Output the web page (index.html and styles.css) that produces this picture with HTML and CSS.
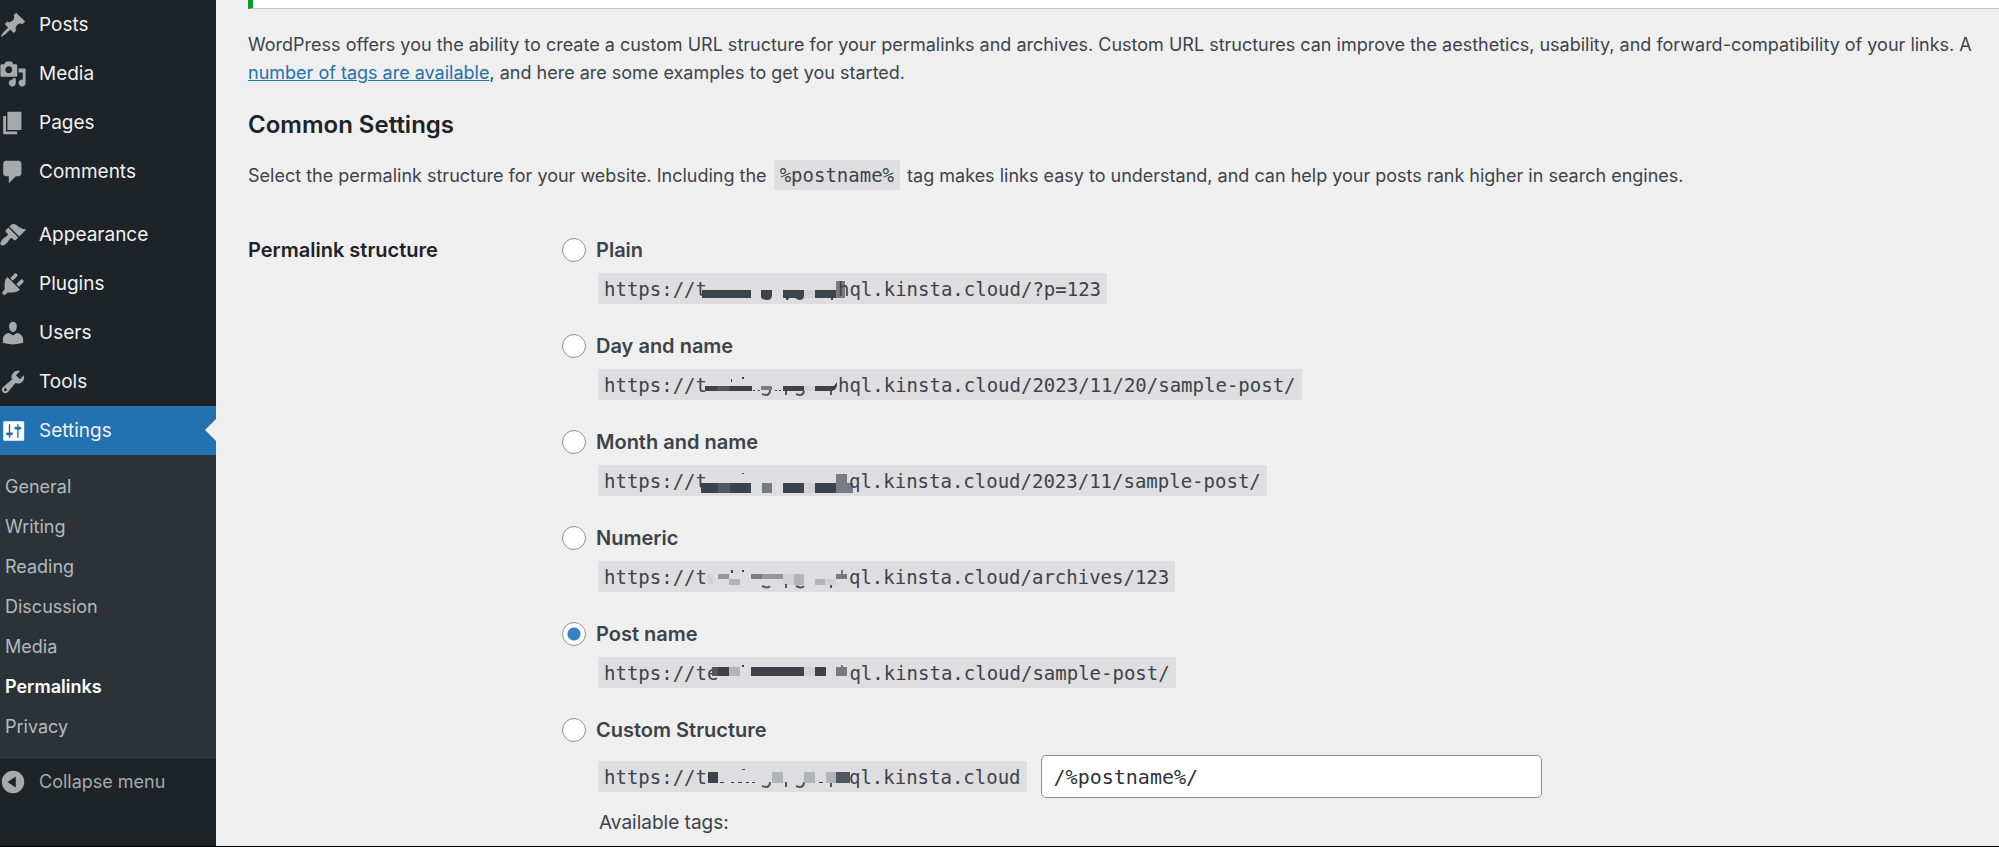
FILE: index.html
```
<!DOCTYPE html>
<html lang="en">
    <head>
        <meta charset="utf-8">
        <meta name="viewport" content="width=device-width, initial-scale=1">
        <title>Permalink Settings</title>
        <link rel="stylesheet" href="styles.css">
    </head>

    <body>
        <nav class="sidebar">
            <ul class="menu">
                <li><a href="#"><svg class="icon" viewBox="0 0 20 20"><path d="M10.44 3.02l1.82-1.82 6.36 6.35-1.83 1.82c-1.05-.68-2.48-.57-3.41.36l-.75.75c-.92.93-1.04 2.35-.35 3.41l-1.83 1.82-2.41-2.41-2.8 2.79c-.42.42-3.38 2.71-3.8 2.29s1.86-3.39 2.28-3.81l2.79-2.79L4.1 9.36l1.83-1.82c1.05.69 2.48.57 3.4-.36l.75-.75c.93-.92 1.05-2.35.36-3.41z"/></svg>Posts</a></li>
                <li><a href="#"><svg class="icon" viewBox="0 0 20 20"><path d="M13 11V4c0-.55-.45-1-1-1h-1.67L9 1H5L3.67 3H2c-.55 0-1 .45-1 1v7c0 .55.45 1 1 1h10c.55 0 1-.45 1-1zM7 4.5c1.38 0 2.5 1.12 2.5 2.5S8.38 9.5 7 9.5 4.5 8.38 4.5 7 5.62 4.5 7 4.5zM14 6h5v10.5c0 1.38-1.12 2.5-2.5 2.5S14 17.88 14 16.5s1.12-2.5 2.5-2.5c.17 0 .34.02.5.05V9h-3V6zm-4 8.05V13h2v3.5c0 1.38-1.12 2.5-2.5 2.5S7 17.88 7 16.5 8.12 14 9.5 14c.17 0 .34.02.5.05z"/></svg>Media</a></li>
                <li><a href="#"><svg class="icon" viewBox="0 0 20 20"><path d="M6 15V2h10v13H6zm-1 1h8v2H3V5h2v11z"/></svg>Pages</a></li>
                <li><a href="#"><svg class="icon" viewBox="0 0 20 20"><path d="M5 2h9c1.1 0 2 .9 2 2v7c0 1.1-.9 2-2 2h-2l-5 5v-5H5c-1.1 0-2-.9-2-2V4c0-1.1.9-2 2-2z"/></svg>Comments</a></li>
                <li class="separator"></li>
                <li><a href="#"><svg class="icon" viewBox="0 0 20 20"><path d="M14.48 11.06L7.41 3.99l1.5-1.5c.5-.56 2.3-.47 3.51.32 1.21.8 1.43 1.28 2.91 2.1 1.18.64 2.45 1.26 4.45.85zm-.71.71L6.7 4.7 4.93 6.47c-.39.39-.39 1.02 0 1.41l1.06 1.06c.39.39.39 1.03 0 1.42-.6.6-1.43 1.11-2.21 1.69-.35.26-.7.53-1.01.84C1.43 14.23.4 16.08 1.4 17.07c.99 1 2.84-.03 4.18-1.36.31-.31.58-.66.85-1.02.57-.78 1.08-1.61 1.69-2.21.39-.39 1.02-.39 1.41 0l1.06 1.06c.39.39 1.02.39 1.41 0z"/></svg>Appearance</a></li>
                <li><a href="#"><svg class="icon" viewBox="0 0 20 20"><path d="M13.11 4.36L9.87 7.6 8 5.73l3.24-3.24c.35-.34 1.05-.2 1.56.32.52.51.66 1.21.31 1.55zm-8 1.77l.91-1.12 9.01 9.01-1.19.84c-.71.71-2.63 1.16-3.82 1.16H6.14L4.9 17.26c-.59.59-1.54.59-2.12 0-.59-.58-.59-1.53 0-2.12l1.24-1.24v-3.88c0-1.13.4-3.19 1.09-3.89zm7.26 3.97l3.24-3.24c.34-.35 1.04-.21 1.55.31.52.51.66 1.21.31 1.55l-3.24 3.25z"/></svg>Plugins</a></li>
                <li><a href="#"><svg class="icon" viewBox="0 0 20 20"><path d="M10 9.25c-2.27 0-2.73-3.44-2.73-3.44C7 4.02 7.82 2 9.97 2c2.16 0 2.98 2.02 2.71 3.81 0 0-.41 3.44-2.68 3.44zm0 2.57L12.72 10c2.39 0 4.52 2.33 4.52 4.53v2.49s-3.65 1.13-7.24 1.13c-3.65 0-7.24-1.13-7.24-1.13v-2.49c0-2.25 1.94-4.48 4.47-4.48z"/></svg>Users</a></li>
                <li><a href="#"><svg class="icon" viewBox="0 0 20 20"><path d="M16.68 9.77c-1.34 1.34-3.3 1.67-4.95.99l-5.41 6.52c-.99.99-2.59.99-3.58 0s-.99-2.59 0-3.57l6.52-5.42c-.68-1.65-.35-3.61.99-4.95 1.28-1.28 3.12-1.62 4.72-1.06l-2.89 2.89 2.82 2.82 2.86-2.87c.53 1.58.18 3.39-1.08 4.65zM3.81 16.21c.4.39 1.04.39 1.43 0 .4-.4.4-1.04 0-1.43-.39-.4-1.03-.4-1.43 0-.39.39-.39 1.03 0 1.43z"/></svg>Tools</a></li>
                <li class="current"><a href="#"><svg class="icon" viewBox="0 0 20 20"><path d="M18 16V4c0-.55-.45-1-1-1H4c-.55 0-1 .45-1 1v12c0 .55.45 1 1 1h13c.55 0 1-.45 1-1zM8 11h1c.55 0 1 .45 1 1s-.45 1-1 1H8v1.5c0 .28-.22.5-.5.5s-.5-.22-.5-.5V13H6c-.55 0-1-.45-1-1s.45-1 1-1h1V5.5c0-.28.22-.5.5-.5s.5.22.5.5V11zm5-2h-1c-.55 0-1-.45-1-1s.45-1 1-1h1V5.5c0-.28.22-.5.5-.5s.5.22.5.5V7h1c.55 0 1 .45 1 1s-.45 1-1 1h-1v5.5c0 .28-.22.5-.5.5s-.5-.22-.5-.5V9z"/></svg>Settings</a></li>
            </ul>
            <ul class="submenu">
                <li><a href="#">General</a></li>
                <li><a href="#">Writing</a></li>
                <li><a href="#">Reading</a></li>
                <li><a href="#">Discussion</a></li>
                <li><a href="#">Media</a></li>
                <li><a href="#" class="active">Permalinks</a></li>
                <li><a href="#">Privacy</a></li>
            </ul>
            <button type="button" class="collapse">
                <svg class="icon" viewBox="0 0 20 20"><path fill-rule="evenodd" d="M10 2a8 8 0 1 0 0 16 8 8 0 0 0 0-16zM12 6v8l-6-4z"/></svg>Collapse menu
            </button>
        </nav>

        <main class="content">
            <div class="notice"></div>
            <p class="intro">WordPress offers you the ability to create a custom URL structure for your permalinks and archives. Custom URL structures can improve the aesthetics, usability, and forward-compatibility of your links. A<br><a href="#">number of tags are available</a>, and here are some examples to get you started.</p>
            <h2>Common Settings</h2>
            <p class="select">Select the permalink structure for your website. Including the <code>%postname%</code> tag makes links easy to understand, and can help your posts rank higher in search engines.</p>

            <div class="structure">
                <h3 id="structure-title">Permalink structure</h3>
                <div class="options" role="radiogroup" aria-labelledby="structure-title">
                    <div class="option">
                        <input type="radio" name="selection" id="plain">
                        <label for="plain">Plain</label>
                        <code class="url">https://t<svg class="mask" width="136" height="31">
                            <rect class="dark" x="0" y="17" width="49" height="8"/>
                            <path class="dark" d="M59 17h11v5q0 5-5 5-6 0-6-4z"/>
                            <path class="dark" d="M81 17h21v6q0 4-5 4l-4-2h-6l-1 2h-2v-2h-3z"/>
                            <rect class="light" x="102" y="17" width="11" height="8"/>
                            <path class="dark" d="M113 17h21v8h-3v2h-2v-2h-16z"/>
                            <rect class="grey" x="134" y="8" width="9" height="17"/>
                        </svg>hql.kinsta.cloud/?p=123</code>
                    </div>
                    <div class="option">
                        <input type="radio" name="selection" id="day">
                        <label for="day">Day and name</label>
                        <code class="url">https://t<svg class="mask" width="136" height="31">
                            <rect class="dark" x="3" y="17" width="12" height="5"/>
                            <rect class="slate" x="15" y="17" width="12" height="5"/>
                            <rect class="dark" x="27" y="17" width="23" height="5"/>
                            <path class="dark" d="M29 10h1v3h-1zM40 8h2v2h-2zM51 21h2v1h-2zM56 21h2v1h-2z"/>
                            <rect class="grey" x="59" y="17" width="11" height="4"/>
                            <path class="line" d="M60 25q8 3 8-4M94 25q8 3 8-4M84 21v5M129 21v5"/>
                            <rect class="dark" x="81" y="17" width="21" height="5"/>
                            <rect class="light" x="102" y="17" width="11" height="5"/>
                            <path class="dark" d="M113 17h19l3-4q1 9-7 9h-15zM73 21h2v1h-2zM77 21h2v1h-2z"/>
                        </svg>hql.kinsta.cloud/2023/11/20/sample-post/</code>
                    </div>
                    <div class="option">
                        <input type="radio" name="selection" id="month">
                        <label for="month">Month and name</label>
                        <code class="url">https://t<svg class="mask" width="147" height="31">
                            <rect class="dark" x="-1" y="18" width="50" height="10"/>
                            <rect class="slate" x="16" y="18" width="12" height="10"/>
                            <rect class="dark" x="40" y="8" width="2" height="1"/>
                            <rect class="grey" x="60" y="18" width="10" height="10"/>
                            <rect class="dark" x="81" y="18" width="21" height="10"/>
                            <rect class="light" x="102" y="18" width="11" height="10"/>
                            <rect class="dark" x="113" y="18" width="21" height="10"/>
                            <rect class="grey" x="134" y="9" width="11" height="19"/>
                            <rect class="grey" x="145" y="18" width="6" height="10"/>
                        </svg>ql.kinsta.cloud/2023/11/sample-post/</code>
                    </div>
                    <div class="option">
                        <input type="radio" name="selection" id="numeric">
                        <label for="numeric">Numeric</label>
                        <code class="url">https://t<svg class="mask" width="147" height="31">
                            <rect class="light" x="6" y="13" width="5" height="10"/>
                            <rect class="mid" x="16" y="13" width="11" height="5"/>
                            <rect class="pale" x="27" y="18" width="11" height="6"/>
                            <path class="dark" d="M29 9h2v3h-2zM40 9h2v2h-2z"/>
                            <rect class="grey" x="49" y="13" width="11" height="5"/>
                            <rect class="mid" x="60" y="13" width="21" height="5"/>
                            <rect class="light" x="81" y="13" width="11" height="11"/>
                            <rect class="pale" x="92" y="13" width="10" height="11"/>
                            <path class="line" d="M60 25q6 3 8 0M94 25q6 3 8 0M84 23v4M129 23v4"/>
                            <rect class="pale" x="113" y="18" width="10" height="6"/>
                            <rect class="light" x="123" y="18" width="11" height="6"/>
                            <path class="grey" d="M134 13h5v-4h2v4h4v5h-11z"/>
                        </svg>ql.kinsta.cloud/archives/123</code>
                    </div>
                    <div class="option">
                        <input type="radio" name="selection" id="postname" checked>
                        <label for="postname">Post name</label>
                        <code class="url">https://te<svg class="mask" width="136" height="31">
                            <rect class="slate" x="-1" y="10" width="6" height="9"/>
                            <rect class="dark" x="5" y="10" width="11" height="9"/>
                            <rect class="pale" x="16" y="10" width="11" height="9"/>
                            <rect class="dark" x="29" y="8" width="2" height="2"/>
                            <rect class="dark" x="38" y="10" width="53" height="9"/>
                            <rect class="light" x="91" y="10" width="11" height="9"/>
                            <rect class="dark" x="102" y="10" width="11" height="9"/>
                            <path class="grey" d="M123 10h5v-2h2v2h4v9h-11z"/>
                        </svg>ql.kinsta.cloud/sample-post/</code>
                    </div>
                    <div class="option">
                        <input type="radio" name="selection" id="custom">
                        <label for="custom">Custom Structure</label>
                        <div class="custom">
                            <code class="url">https://t<svg class="mask" width="147" height="31">
                                <rect class="dark" x="6" y="11" width="10" height="11"/>
                                <path class="dark" d="M40 8h3v1h-3zM18 21h4v1h-4zM29 21h3v1h-3zM36 21h4v1h-4zM44 21h3v1h-3zM50 21h3v1h-3zM117 21h4v1h-4z"/>
                                <path class="line" d="M60 25q8 3 8-4M94 25q8 3 8-4M84 21v5M129 21v5"/>
                                <rect class="pale" x="70" y="11" width="11" height="11"/>
                                <rect class="pale" x="102" y="11" width="11" height="11"/>
                                <rect class="pale" x="124" y="11" width="10" height="11"/>
                                <rect class="slate" x="134" y="11" width="14" height="11"/>
                            </svg>ql.kinsta.cloud</code>
                            <input type="text" class="custom-field" aria-label="Custom structure" value="/%postname%/">
                        </div>
                        <p class="tags">Available tags:</p>
                    </div>
                </div>
            </div>
        </main>
    </body>
</html>
```
FILE: styles.css
```
* {
    box-sizing: border-box;
}
body {
    display: flex;
    height: 100vh;
    margin: 0;
    overflow: hidden;
    border-bottom: 1px solid #000;
    background-color: #efeff0;
    color: #3c434a;
    font-family: Inter, "Liberation Sans", sans-serif;
    font-size: 18px;
    line-height: 28px;
}
ul {
    margin: 0;
    padding: 0;
    list-style: none;
}

/* sidebar */
.sidebar {
    flex: none;
    width: 216px;
    background-color: #1d2327;
}
.menu a {
    display: flex;
    align-items: center;
    gap: 12px;
    height: 49px;
    margin-left: -1px;
    color: #f0f0f1;
    font-size: 19px;
    text-decoration: none;
}
.icon {
    flex: none;
    width: 28px;
    height: 28px;
    fill: #a7aaad;
}
.separator {
    height: 14px;
}
.current {
    position: relative;
    background-color: #2271b1;
}
.current .icon {
    fill: #fff;
}
.current::after {
    content: "";
    position: absolute;
    top: 13px;
    right: 0;
    border: 11px solid transparent;
    border-left: none;
    border-right-color: #efeff0;
}
.submenu {
    padding: 12px 0;
    background-color: #2c3338;
}
.submenu a {
    display: block;
    padding: 0 5px;
    color: #b4b9be;
    line-height: 40px;
    text-decoration: none;
}
.submenu .active {
    color: #fff;
    font-weight: 600;
}
.collapse {
    display: flex;
    align-items: center;
    gap: 12px;
    height: 46px;
    margin: 0 0 0 -1px;
    padding: 0;
    border: none;
    background: none;
    color: #a7aaad;
    font: inherit;
}

/* content */
.content {
    flex: 1;
    min-width: 0;
    padding-left: 32px;
}
.notice {
    height: 9px;
    border-bottom: 1px solid #c3c4c7;
    border-left: 5px solid #00a32a;
    background-color: #fff;
}
.intro {
    margin: 22px 0 0;
    white-space: nowrap;
}
.intro a {
    color: #2271b1;
}
h2 {
    margin: 22px 0 18px;
    color: #1d2327;
    font-size: 24px;
    font-weight: 600;
    line-height: 32px;
}
.select {
    margin: 0;
    line-height: 32px;
}
code {
    padding: 4px 6px;
    background-color: #dedee1;
    font-family: "DejaVu Sans Mono", monospace;
    font-size: 19px;
}
.select code {
    margin: 0 2px;
}
.structure {
    display: flex;
    margin-top: 44px;
}
h3 {
    flex: none;
    width: 314px;
    margin: 0;
    color: #1d2327;
    font-size: 20px;
    font-weight: 600;
}
.options {
    flex: 1;
}
.option {
    display: grid;
    grid-template-columns: 24px 1fr;
    gap: 9px 10px;
    align-items: center;
    justify-items: start;
    margin-bottom: 28px;
}
.option label {
    font-size: 20px;
    font-weight: 600;
}
input[type=radio] {
    appearance: none;
    width: 24px;
    height: 24px;
    margin: 0;
    border: 1px solid #8c8f94;
    border-radius: 50%;
    background-color: #fff;
}
input[type=radio]:checked {
    background-image: radial-gradient(circle, #3582c4 6px, transparent 7px);
}
.url {
    display: flex;
    align-items: center;
    grid-column: 2;
    margin-left: 2px;
    padding: 0 6px;
}

/* blocks that hide a part of the host name */
.mask {
    flex: none;
    margin-left: -5px;
    overflow: visible;
}
.dark {
    fill: #3c434a;
}
.slate {
    fill: #50575e;
}
.grey {
    fill: #787c82;
}
.mid {
    fill: #95979b;
}
.pale {
    fill: #b3b4b8;
}
.light {
    fill: #d0d2d5;
}
.line {
    fill: none;
    stroke: #50575e;
    stroke-width: 2;
}

.custom {
    display: flex;
    align-items: center;
    grid-column: 2;
    gap: 14px;
    margin: 2px 0;
}
.custom-field {
    width: 501px;
    height: 43px;
    padding: 0 12px;
    border: 1px solid #8c8f94;
    border-radius: 5px;
    background-color: #fff;
    color: #2c3338;
    font-family: "DejaVu Sans Mono", monospace;
    font-size: 20px;
}
.tags {
    grid-column: 2;
    margin: 0 0 0 3px;
    font-size: 19px;
}
```
